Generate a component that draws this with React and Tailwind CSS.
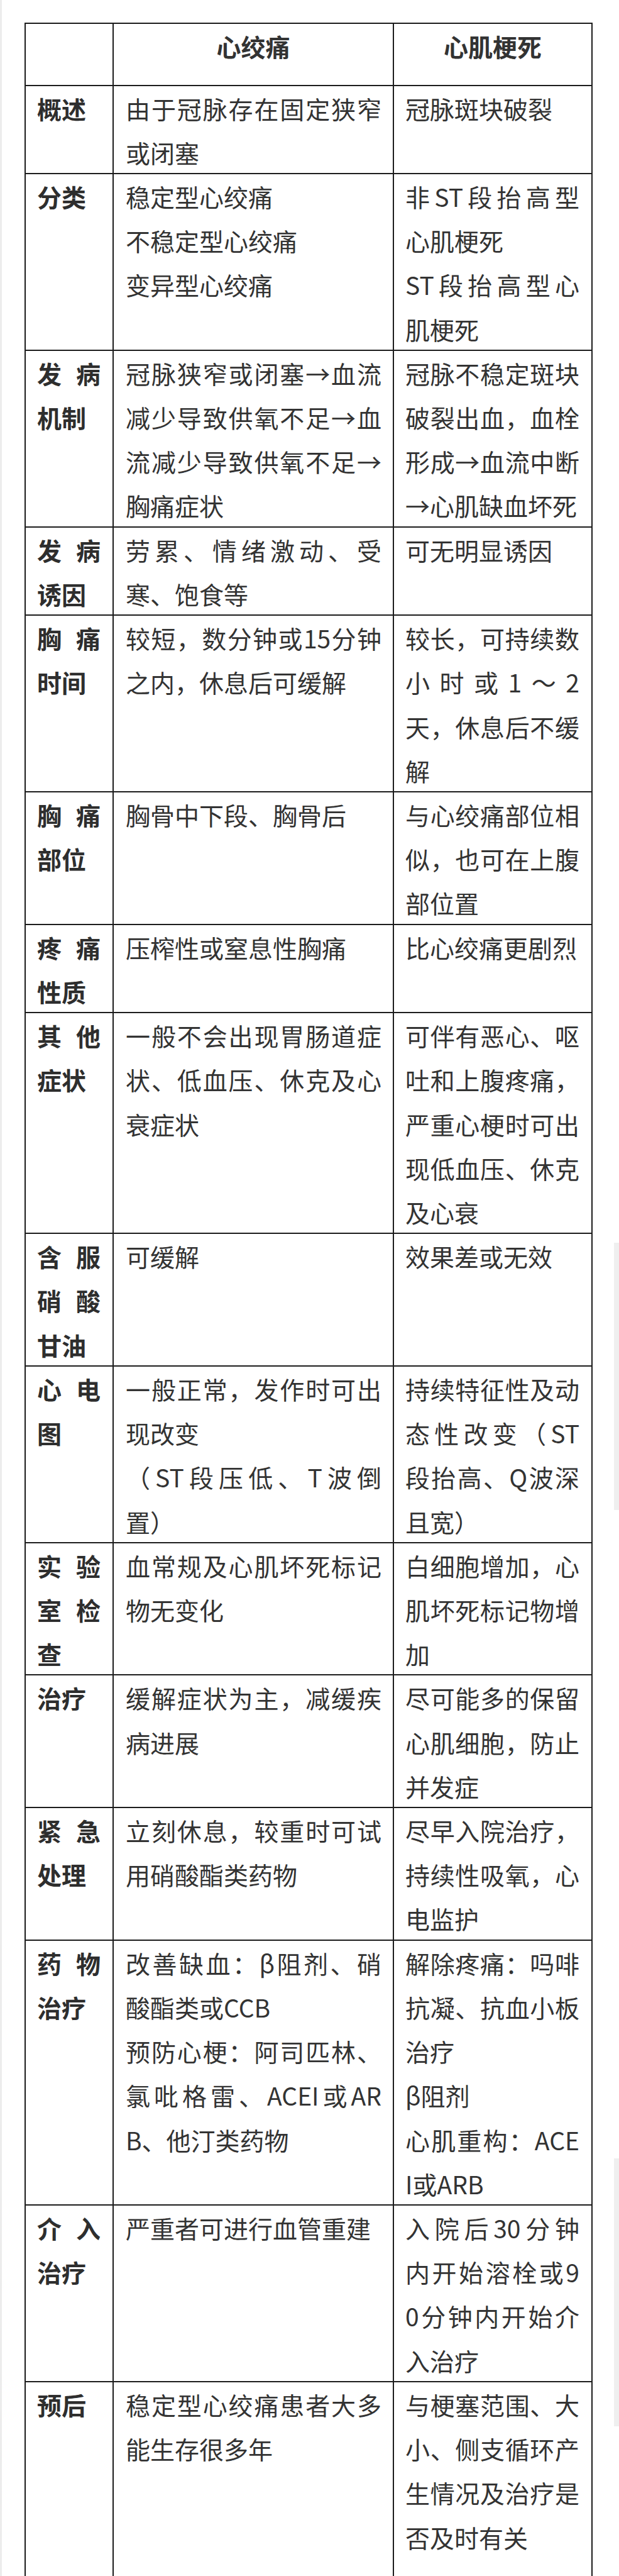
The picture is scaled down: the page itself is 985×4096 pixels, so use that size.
import React from 'react';

// each cell: list of paragraphs, each paragraph is a list of pre-broken lines
const rows = [
    { n: 2, label: [['概述']], a: [['由于冠脉存在固定狭窄', '或闭塞']], b: [['冠脉斑块破裂']] },
    { n: 4, label: [['分类']], a: [['稳定型心绞痛'], ['不稳定型心绞痛'], ['变异型心绞痛']], b: [['非ST段抬高型', '心肌梗死'], ['ST段抬高型心', '肌梗死']] },
    { n: 4, label: [['发病', '机制']], a: [['冠脉狭窄或闭塞→血流', '减少导致供氧不足→血', '流减少导致供氧不足→', '胸痛症状']], b: [['冠脉不稳定斑块', '破裂出血，血栓', '形成→血流中断', '→心肌缺血坏死']] },
    { n: 2, label: [['发病', '诱因']], a: [['劳累、情绪激动、受', '寒、饱食等']], b: [['可无明显诱因']] },
    { n: 4, label: [['胸痛', '时间']], a: [['较短，数分钟或15分钟', '之内，休息后可缓解']], b: [['较长，可持续数', '小时或1～2', '天，休息后不缓', '解']] },
    { n: 3, label: [['胸痛', '部位']], a: [['胸骨中下段、胸骨后']], b: [['与心绞痛部位相', '似，也可在上腹', '部位置']] },
    { n: 2, label: [['疼痛', '性质']], a: [['压榨性或窒息性胸痛']], b: [['比心绞痛更剧烈']] },
    { n: 5, label: [['其他', '症状']], a: [['一般不会出现胃肠道症', '状、低血压、休克及心', '衰症状']], b: [['可伴有恶心、呕', '吐和上腹疼痛，', '严重心梗时可出', '现低血压、休克', '及心衰']] },
    { n: 3, label: [['含服', '硝酸', '甘油']], a: [['可缓解']], b: [['效果差或无效']] },
    { n: 4, label: [['心电', '图']], a: [['一般正常，发作时可出', '现改变'], ['（ST段压低、T波倒', '置）']], b: [['持续特征性及动', '态性改变（ST', '段抬高、Q波深', '且宽）']] },
    { n: 3, label: [['实验', '室检', '查']], a: [['血常规及心肌坏死标记', '物无变化']], b: [['白细胞增加，心', '肌坏死标记物增', '加']] },
    { n: 3, label: [['治疗']], a: [['缓解症状为主，减缓疾', '病进展']], b: [['尽可能多的保留', '心肌细胞，防止', '并发症']] },
    { n: 3, label: [['紧急', '处理']], a: [['立刻休息，较重时可试', '用硝酸酯类药物']], b: [['尽早入院治疗，', '持续性吸氧，心', '电监护']] },
    { n: 6, label: [['药物', '治疗']], a: [['改善缺血：β阻剂、硝', '酸酯类或CCB'], ['预防心梗：阿司匹林、', '氯吡格雷、ACEI或AR', 'B、他汀类药物']], b: [['解除疼痛：吗啡', '抗凝、抗血小板', '治疗'], ['β阻剂'], ['心肌重构：ACE', 'I或ARB']] },
    { n: 4, label: [['介入', '治疗']], a: [['严重者可进行血管重建']], b: [['入院后30分钟', '内开始溶栓或9', '0分钟内开始介', '入治疗']] },
    { n: 5, label: [['预后']], a: [['稳定型心绞痛患者大多', '能生存很多年']], b: [['与梗塞范围、大', '小、侧支循环产', '生情况及治疗是', '否及时有关']] },
];

const LINE = 70.22;

const Cell = ({ paras, className = '' }) => (
    <div className={className}>
        {paras.map((lines, p) =>
            lines.map((t, i) => (
                <div
                    key={p + '-' + i}
                    className={i < lines.length - 1 ? 'text-justify [text-align-last:justify]' : 'text-left'}
                >
                    {t}
                </div>
            ))
        )}
    </div>
);

export default function App() {
    return (
        <div className="relative min-h-screen bg-white border-l-[3px] border-[#ececec] pt-[36px] font-['Noto_Sans_CJK_SC','Noto_Sans',sans-serif] text-[39px] leading-[70.22px] text-[#333333]">
            <div className="ml-[36px] w-[904px] border-x-2 border-t-2 border-[#1c1c1c]">
                {/* header */}
                <div className="grid grid-cols-[140px_446px_314px] h-[98.5px] border-b-2 border-[#1c1c1c]">
                    <div className="border-r-2 border-[#1c1c1c]" />
                    <div className="border-r-2 border-[#1c1c1c] text-center font-bold">心绞痛</div>
                    <div className="text-center font-bold">心肌梗死</div>
                </div>

                {rows.map((r, i) => (
                    <div
                        key={i}
                        className="grid grid-cols-[140px_446px_314px] box-border border-b-2 border-[#1c1c1c] overflow-hidden"
                        style={{ height: r.n * LINE }}
                    >
                        <Cell paras={r.label} className="border-r-2 border-[#1c1c1c] pl-[18px] pr-[19px] font-bold text-[#2e2e2e]" />
                        <Cell paras={r.a} className="border-r-2 border-[#1c1c1c] pl-[19px] pr-[18px]" />
                        <Cell paras={r.b} className="pl-[18px] pr-[19px]" />
                    </div>
                ))}
            </div>

            {/* faint scrollbar remnants on the right edge */}
            <div className="absolute right-0 top-[1976px] w-[8px] h-[425px] bg-[#efefef]" />
            <div className="absolute right-0 top-[3432px] w-[8px] h-[426px] bg-[#efefef]" />
        </div>
    );
}
